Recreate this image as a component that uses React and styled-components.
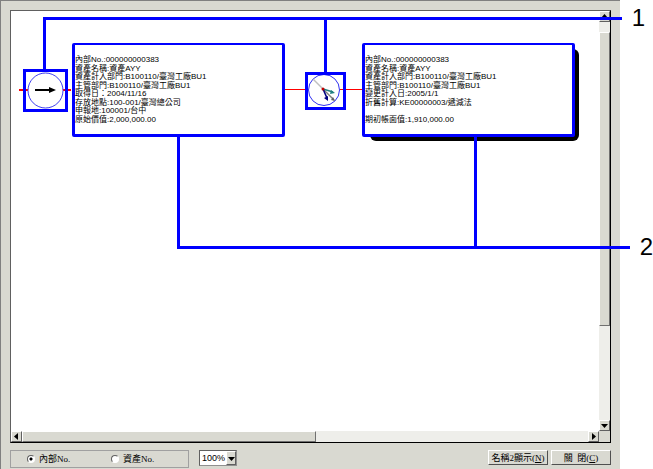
import React, {useState} from 'react';
import styled, {createGlobalStyle} from 'styled-components';

const assetCards = [
  {
    id: 'acquire',
    x: 61,
    rows: [
      '內部No.:000000000383',
      '資產名稱:資產AYY',
      '資產計入部門:B100110/臺灣工廠BU1',
      '主管部門:B100110/臺灣工廠BU1',
      '取得日：2004/11/16',
      '存放地點:100-001/臺灣總公司',
      '申報地:100001/台中',
      '原始價值:2,000,000.00',
    ],
  },
  {
    id: 'change',
    x: 351,
    raised: true,
    rows: [
      '內部No.:000000000383',
      '資產名稱:資產AYY',
      '資產計入部門:B100110/臺灣工廠BU1',
      '主管部門:B100110/臺灣工廠BU1',
      '變更計入日:2005/1/1',
      '折舊計算:KE00000003/遞減法',
      '',
      '期初帳面值:1,910,000.00',
    ],
  },
];

const App = () => {
  const [display, setDisplay] = useState('internal');
  const [zoom, setZoom] = useState('100%');

  return (
    <>
      <GlobalStyle />
      <Page>
        <Window>
          <Viewer>
            <Canvas>
              <AssetFlow />
            </Canvas>
            <ScrollBar $vertical>
              <ScrollButton type="button" aria-label="向上捲動">
                <Arrow direction="up" />
              </ScrollButton>
              <Gap />
              <Thumb $size="70%" />
              <Track />
              <ScrollButton type="button" aria-label="向下捲動">
                <Arrow direction="down" />
              </ScrollButton>
            </ScrollBar>
            <ScrollBar>
              <ScrollButton type="button" aria-label="向左捲動">
                <Arrow direction="left" />
              </ScrollButton>
              <Thumb $size="50%" />
              <Track />
              <ScrollButton type="button" aria-label="向右捲動">
                <Arrow direction="right" />
              </ScrollButton>
            </ScrollBar>
            <Corner />
          </Viewer>
          <Footer>
            <RadioGroup>
              <RadioItem
                label="內部No."
                checked={display === 'internal'}
                onChange={() => setDisplay('internal')}
              />
              <RadioItem label="資產No." checked={display === 'asset'} onChange={() => setDisplay('asset')} />
            </RadioGroup>
            <SelectBox>
              <Select aria-label="顯示比例" value={zoom} onChange={(e) => setZoom(e.target.value)}>
                <option>50%</option>
                <option>100%</option>
                <option>200%</option>
              </Select>
              <SelectArrow>
                <Arrow direction="down" />
              </SelectArrow>
            </SelectBox>
            <ButtonGroup>
              <Button type="button">
                名稱2顯示(<u>N</u>)
              </Button>
              <Button type="button">
                關&nbsp; 閉(<u>C</u>)
              </Button>
            </ButtonGroup>
          </Footer>
        </Window>
        <Stem $x={43} $top={20} $height={50} />
        <Stem $x={324} $top={20} $height={53} />
        <Stem $x={177} $top={136} $height={111} />
        <Stem $x={474} $top={136} $height={111} />
        <Callout $left={43} $right={8} $top={6}>
          1
        </Callout>
        <Callout $left={177} $right={0} $top={235}>
          2
        </Callout>
      </Page>
    </>
  );
};

export default App;

// 資產異動流程
const AssetFlow = () => {
  return (
    <>
      <RedLine $x={8} $width={52} $thick />
      <RedLine $x={274} $width={77} />
      <EventBox $x={12} $y={58} $width={45} $height={43}>
        <svg width="39" height="37" viewBox="0 0 39 37" aria-hidden="true">
          <path d="M0 18h5M35 18h4" stroke="#f00" strokeWidth="2" />
          <circle cx="19.5" cy="18.5" r="17.5" fill="#fff" stroke="#4040f0" />
          <path d="M9 18h15" stroke="#000" strokeWidth="2" />
          <path d="M23 15l7 3-7 3z" fill="#000" />
        </svg>
      </EventBox>
      <EventBox $x={294} $y={61} $width={41} $height={38}>
        <svg width="35" height="32" viewBox="0 0 35 32" aria-hidden="true">
          <path d="M32 14.5h3" stroke="#f00" />
          <circle cx="16" cy="15" r="15.5" fill="#fff" stroke="#3030f0" />
          <path d="M5 4l10 10" stroke="#c0c0c0" strokeWidth="1.4" />
          <path d="M15 14l11 11" stroke="#808080" strokeWidth="1.4" />
          <path d="M27 26l-4-1 2-3z" fill="#606060" />
          <path d="M15 14l10 3" stroke="#208080" strokeWidth="1.4" />
          <path d="M27 18l-5 1 1-4z" fill="#208080" />
          <path d="M15 14l4 9" stroke="#000080" strokeWidth="1.6" />
          <path d="M20 26l-4-3 4-2z" fill="#000080" />
          <circle cx="15" cy="14" r="1.5" fill="#c00000" />
        </svg>
      </EventBox>
      {assetCards.map((card) => (
        <AssetCard key={card.id} $x={card.x} $raised={card.raised}>
          {card.rows.map((row, i) => (
            <CardRow key={i}>{row}</CardRow>
          ))}
        </AssetCard>
      ))}
    </>
  );
};

const RadioItem = ({label, checked, onChange}) => {
  return (
    <RadioLabel>
      <Radio type="radio" name="display" checked={checked} onChange={onChange} />
      {label}
    </RadioLabel>
  );
};

const arrowPaths = {
  up: 'M0 5h7L3.5 1z',
  down: 'M0 2h7L3.5 6z',
  left: 'M5 0v7L1 3.5z',
  right: 'M2 0v7l4-3.5z',
};

const Arrow = ({direction}) => (
  <svg width="7" height="7" viewBox="0 0 7 7" aria-hidden="true">
    <path d={arrowPaths[direction]} fill="#000" />
  </svg>
);

const GlobalStyle = createGlobalStyle`
  * {
    box-sizing: border-box;
  }

  body {
    margin: 0;
    background: #fff;
    color: #000;
    font-family: 'Liberation Serif', 'Noto Sans CJK TC', serif;
    font-size: 9px;
  }
`;

const Page = styled.div`
  position: relative;
  min-height: 100vh;
  padding-right: 33px;
  display: flex;
  overflow: hidden;
`;

const Window = styled.main`
  flex: 1;
  min-width: 0;
  display: flex;
  flex-direction: column;
  gap: 7px;
  padding: 9px 9px 1px 9px;
  background: #d9d9d1;
  border-top: 1px solid #808080;
  border-left: 1px solid #808080;
`;

const Viewer = styled.section`
  flex: 1;
  display: grid;
  grid-template-columns: 1fr 11px;
  grid-template-rows: 1fr 11px;
  border: 1px solid #606060;
  border-right-color: #000;
  border-bottom-color: #000;
`;

const Canvas = styled.div`
  position: relative;
  isolation: isolate;
  min-height: 300px;
  min-width: 0;
  overflow: hidden;
  background: #fff;
`;

const ScrollBar = styled.div`
  display: flex;
  flex-direction: ${(props) => (props.$vertical ? 'column' : 'row')};
  background: #eeeeea;
`;

const ScrollButton = styled.button`
  flex: none;
  width: 11px;
  height: 11px;
  padding: 0;
  display: flex;
  align-items: center;
  justify-content: center;
  background: #d9d9d1;
  border: 1px solid;
  border-color: #fff #606060 #606060 #fff;
`;

const Thumb = styled.div`
  flex: 0 1 ${(props) => props.$size};
  background: #d9d9d1;
  border: 1px solid;
  border-color: #fff #707070 #707070 #fff;
`;

const Gap = styled.div`
  flex: 0 0 10px;
`;

const Track = styled.div`
  flex: 1;
`;

const Corner = styled.div`
  background: #d9d9d1;
`;

const RedLine = styled.div`
  position: absolute;
  left: ${(props) => props.$x}px;
  top: 78px;
  width: ${(props) => props.$width}px;
  height: ${(props) => (props.$thick ? '2px' : '1px')};
  background: #f00;
`;

const EventBox = styled.div`
  position: absolute;
  left: ${(props) => props.$x}px;
  top: ${(props) => props.$y}px;
  width: ${(props) => props.$width}px;
  height: ${(props) => props.$height}px;
  border: 3px solid #00f;
  background: #fff;

  svg {
    display: block;
  }
`;

const AssetCard = styled.ul`
  position: absolute;
  left: ${(props) => props.$x}px;
  top: 32px;
  width: 213px;
  height: 94px;
  margin: 0;
  padding: 11px 0 10px;
  display: grid;
  grid-auto-rows: 1fr;
  list-style: none;
  font-family: 'Liberation Sans', 'Noto Sans CJK TC', sans-serif;
  background: #fff;
  border: 3px solid #00f;
  border-top-width: 2px;
  border-radius: 2px;

  &::after {
    content: '';
    display: ${(props) => (props.$raised ? 'block' : 'none')};
    position: absolute;
    z-index: -1;
    top: 4px;
    right: -7px;
    bottom: -7px;
    left: 5px;
    border-radius: 6px;
    background: #000;
  }
`;

const CardRow = styled.li`
  min-height: 8px;
  font-size: 8px;
  line-height: 8px;
  white-space: nowrap;
`;

const Footer = styled.footer`
  display: flex;
  align-items: flex-start;
`;

const RadioGroup = styled.div`
  width: 179px;
  height: 18px;
  padding-left: 16px;
  display: flex;
  align-items: center;
  border: 1px solid #a0a0a0;
`;

const RadioLabel = styled.label`
  flex: none;
  width: 84px;
  display: flex;
  align-items: center;
  gap: 4px;
  line-height: 12px;

  &:last-child {
    width: auto;
  }
`;

const Radio = styled.input`
  appearance: none;
  width: 8px;
  height: 8px;
  margin: 0;
  border: 1px solid;
  border-color: #606060 #fff #fff #606060;
  border-radius: 50%;
  background: #fff;

  &:checked {
    background: radial-gradient(circle, #000 0 1px, #fff 2px);
  }
`;

const SelectBox = styled.div`
  position: relative;
  width: 38px;
  margin-left: 10px;
`;

const Select = styled.select`
  appearance: none;
  display: block;
  width: 100%;
  height: 16px;
  padding: 0 0 0 2px;
  font-family: 'Liberation Sans', sans-serif;
  font-size: 9px;
  color: #000;
  background: #fff;
  border: 1px solid;
  border-color: #606060 #909090 #909090 #606060;
  border-radius: 0;
`;

const SelectArrow = styled.span`
  position: absolute;
  top: 1px;
  right: 1px;
  bottom: 1px;
  width: 10px;
  display: flex;
  align-items: center;
  justify-content: center;
  background: #d9d9d1;
  border: 1px solid;
  border-color: #fff #606060 #606060 #fff;
  pointer-events: none;
`;

const ButtonGroup = styled.div`
  margin-left: auto;
  display: flex;
  gap: 3px;
`;

const Button = styled.button`
  width: 60px;
  height: 15px;
  padding: 0;
  font-family: inherit;
  font-size: 9px;
  line-height: 12px;
  color: #000;
  white-space: nowrap;
  background: #d9d9d1;
  border: 1px solid;
  border-color: #fff #505050 #505050 #fff;
`;

// 說明線
const Stem = styled.div`
  position: absolute;
  left: ${(props) => props.$x}px;
  top: ${(props) => props.$top}px;
  width: 3px;
  height: ${(props) => props.$height}px;
  background: #00f;
`;

const Callout = styled.div`
  position: absolute;
  left: ${(props) => props.$left}px;
  right: ${(props) => props.$right}px;
  top: ${(props) => props.$top}px;
  display: flex;
  align-items: center;
  gap: 10px;
  font-family: 'Liberation Sans', sans-serif;
  font-size: 24px;
  line-height: 24px;
  pointer-events: none;

  &::before {
    content: '';
    flex: 1;
    height: 3px;
    background: #00f;
  }
`;
